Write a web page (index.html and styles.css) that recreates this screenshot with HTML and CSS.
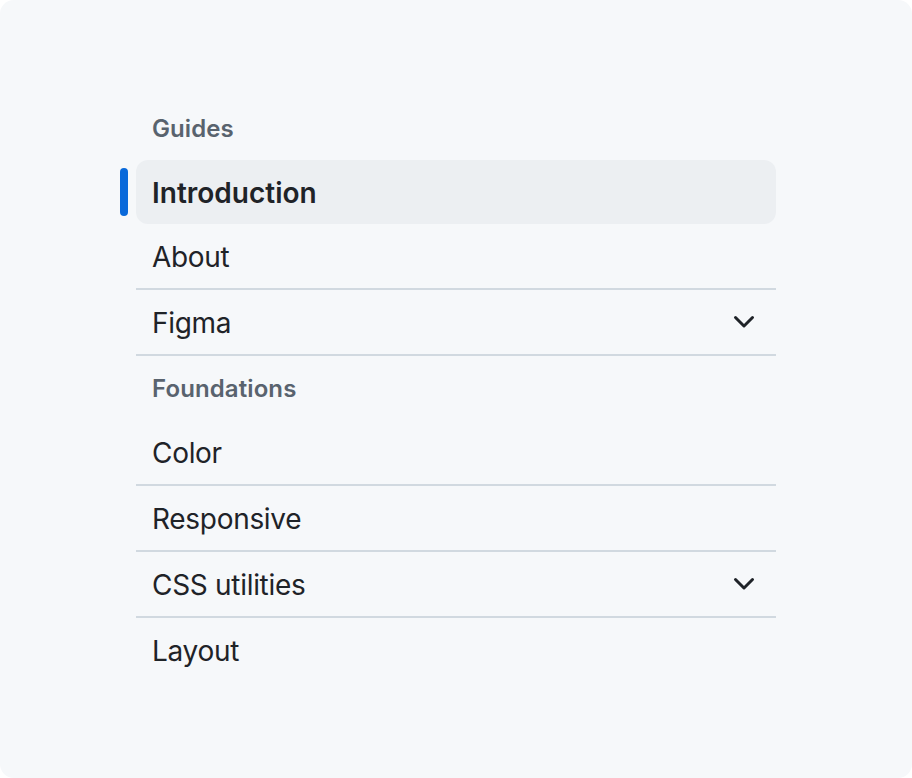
FILE: index.html
```html
<!DOCTYPE html>
<html lang="en">
<head>
<meta charset="utf-8">
<title>NavList</title>
<link rel="stylesheet" href="styles.css">
</head>
<body>
<div class="card">
  <nav class="navlist">
    <div class="heading">Guides</div>
    <a class="item active" href="#"><span class="label">Introduction</span></a>
    <a class="item" href="#"><span class="label">About</span></a>
    <div class="divider"></div>
    <a class="item" href="#"><span class="label">Figma</span>
      <svg class="chev" viewBox="0 0 16 16" width="32" height="32"><path d="M12.78 5.22a.749.749 0 0 1 0 1.06l-4.25 4.25a.749.749 0 0 1-1.060 0L3.22 6.280a.749.749 0 1 1 1.06-1.06L8 8.939l3.72-3.719a.749.749 0 0 1 1.06 0Z"/></svg>
    </a>
    <div class="divider"></div>
    <div class="heading">Foundations</div>
    <a class="item" href="#"><span class="label">Color</span></a>
    <div class="divider"></div>
    <a class="item" href="#"><span class="label">Responsive</span></a>
    <div class="divider"></div>
    <a class="item" href="#"><span class="label">CSS utilities</span>
      <svg class="chev" viewBox="0 0 16 16" width="32" height="32"><path d="M12.78 5.22a.749.749 0 0 1 0 1.06l-4.25 4.25a.749.749 0 0 1-1.060 0L3.22 6.280a.749.749 0 1 1 1.06-1.06L8 8.939l3.72-3.719a.749.749 0 0 1 1.06 0Z"/></svg>
    </a>
    <div class="divider"></div>
    <a class="item" href="#"><span class="label">Layout</span></a>
  </nav>
</div>
</body>
</html>
```
FILE: styles.css
```css
html, body {
  margin: 0;
  padding: 0;
  background: #ffffff;
}
body {
  font-family: Inter, "Noto Sans", "Liberation Sans", sans-serif;
  color: #1f2328;
}
.card {
  width: 912px;
  height: 778px;
  box-sizing: border-box;
  background: #f6f8fa;
  border-radius: 14px;
  padding: 96px 0 0 136px;
}
.navlist {
  width: 640px;
  display: flex;
  flex-direction: column;
}
.heading {
  height: 64px;
  box-sizing: border-box;
  display: flex;
  align-items: center;
  padding: 1px 16px 0;
  font-size: 24px;
  font-weight: 600;
  color: #59636e;
  letter-spacing: 0.1px;
}
.item {
  position: relative;
  height: 64px;
  box-sizing: border-box;
  display: flex;
  align-items: center;
  justify-content: space-between;
  padding: 2px 16px 0;
  font-size: 28px;
  font-weight: 400;
  letter-spacing: -0.3px;
  color: #1f2328;
  text-decoration: none;
  border-radius: 12px;
}
.item.active {
  background: #eceff2;
  font-weight: 600;
  letter-spacing: 0;
}
.item.active::before {
  content: "";
  position: absolute;
  left: -16px;
  top: 8px;
  width: 8px;
  height: 48px;
  border-radius: 6px;
  background: #0969da;
}
.chev {
  fill: #1f2328;
  display: block;
  margin-top: -2px;
}
.divider {
  height: 2px;
  background: #d1d9e0;
}
```
